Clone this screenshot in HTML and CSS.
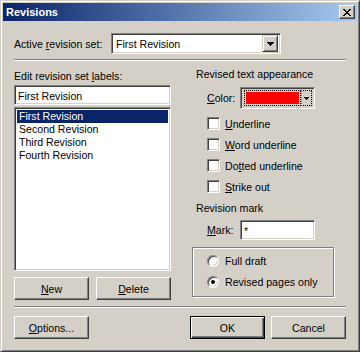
FILE: index.html
```html
<!DOCTYPE html>
<html lang="en">

<head>
     <meta charset="UTF-8">
     <title>Revisions</title>
     <link rel="stylesheet" href="styles.css">
</head>

<body>
     <div class="window">
          <div class="titlebar">
               <span class="title">Revisions</span>
               <span class="close">
                    <svg width="8" height="7" viewBox="0 0 8 7" shape-rendering="crispEdges">
                         <path d="M0 0h2v1h-2zM6 0h2v1h-2zM1 1h2v1h-2zM5 1h2v1h-2zM2 2h4v1h-4zM3 3h2v1h-2zM2 4h4v1h-4zM1 5h2v1h-2zM5 5h2v1h-2zM0 6h2v1h-2zM6 6h2v1h-2z" fill="#000" />
                    </svg>
               </span>
          </div>

          <div class="content">
               <div class="active-row">
                    <span class="active-label">Active <u>r</u>evision set:</span>
                    <div class="combo">
                         <span class="combo-text">First Revision</span>
                         <span class="drop">
                              <svg width="7" height="4" viewBox="0 0 7 4" shape-rendering="crispEdges">
                                   <path d="M0 0h7v1h-7zM1 1h5v1h-5zM2 2h3v1h-3zM3 3h1v1h-1z" fill="#000" />
                              </svg>
                         </span>
                    </div>
               </div>

               <div class="sep"></div>

               <div class="columns">
                    <div class="left">
                         <div class="caption">Edit revision set <u>l</u>abels:</div>
                         <div class="textbox">First Revision</div>
                         <div class="listbox">
                              <div class="item selected">First Revision</div>
                              <div class="item">Second Revision</div>
                              <div class="item">Third Revision</div>
                              <div class="item">Fourth Revision</div>
                         </div>
                         <div class="btn-row">
                              <span class="btn"><u>N</u>ew</span>
                              <span class="btn"><u>D</u>elete</span>
                         </div>
                    </div>

                    <div class="right">
                         <div class="heading">Revised text appearance</div>
                         <div class="field-row color-row">
                              <span class="field-label"><u>C</u>olor:</span>
                              <div class="colorbox">
                                   <span class="swatch-wrap"><span class="swatch"></span></span>
                                   <span class="color-drop">
                                        <svg width="5" height="3" viewBox="0 0 5 3" shape-rendering="crispEdges">
                                             <path d="M0 0h5v1h-5zM1 1h3v1h-3zM2 2h1v1h-1z" fill="#000" />
                                        </svg>
                                   </span>
                              </div>
                         </div>

                         <div class="checks">
                              <div class="check"><span class="checkbox"></span><span><u>U</u>nderline</span></div>
                              <div class="check"><span class="checkbox"></span><span><u>W</u>ord underline</span></div>
                              <div class="check"><span class="checkbox"></span><span>Do<u>t</u>ted underline</span></div>
                              <div class="check"><span class="checkbox"></span><span><u>S</u>trike out</span></div>
                         </div>

                         <div class="heading heading-mark">Revision mark</div>
                         <div class="field-row mark-row">
                              <span class="field-label"><u>M</u>ark:</span>
                              <div class="markbox">*</div>
                         </div>

                         <div class="group">
                              <div class="radio-row"><span class="radio"></span><span>Full draft</span></div>
                              <div class="radio-row"><span class="radio on"></span><span>Revised pages only</span></div>
                         </div>
                    </div>
               </div>

               <div class="sep sep-bottom"></div>

               <div class="footer">
                    <span class="btn"><u>O</u>ptions...</span>
                    <div class="footer-right">
                         <span class="btn default">OK</span>
                         <span class="btn">Cancel</span>
                    </div>
               </div>
          </div>
     </div>
</body>

</html>
```

FILE: styles.css
```css
* {
     box-sizing: border-box;
}

body {
     margin: 0;
     background: #d4d0c8;
     font-family: "Liberation Sans", Arial, sans-serif;
     font-size: 10.6px;
     color: #000;
}

u {
     text-decoration: underline;
}

.window {
     width: 360px;
     height: 352px;
     background: #d4d0c8;
     border: 1px solid;
     border-color: #d4d0c8 #404040 #404040 #d4d0c8;
     box-shadow: inset 1px 1px #fff, inset -1px -1px #808080;
     padding: 2px;
}

/* title bar */
.titlebar {
     height: 18px;
     display: flex;
     align-items: center;
     padding: 0 2px 0 3px;
     background: linear-gradient(to right, #0a246a, #a6caf0);
}

.title {
     color: #fff;
     font-weight: bold;
     font-size: 11px;
}

.close {
     margin-left: auto;
     width: 16px;
     height: 14px;
     display: flex;
     align-items: center;
     justify-content: center;
     background: #d4d0c8;
     border: 1px solid;
     border-color: #fff #404040 #404040 #fff;
     box-shadow: inset -1px -1px #808080;
}

.content {
     padding: 0 11px;
}

/* sunken fields */
.combo,
.textbox,
.listbox,
.markbox,
.colorbox {
     background: #fff;
     border: 1px solid;
     border-color: #808080 #fff #fff #808080;
     box-shadow: inset 1px 1px #404040, inset -1px -1px #d4d0c8;
}

.active-row {
     display: flex;
     align-items: center;
     height: 21px;
     margin-top: 12px;
}

.active-label {
     width: 97px;
}

.combo {
     width: 170px;
     height: 21px;
     display: flex;
     align-items: center;
     padding: 2px 2px 2px 4px;
}

.combo-text {
     flex: 1;
}

.drop {
     width: 16px;
     height: 17px;
     display: flex;
     align-items: center;
     justify-content: center;
     background: #d4d0c8;
     border: 1px solid;
     border-color: #d4d0c8 #404040 #404040 #d4d0c8;
     box-shadow: inset 1px 1px #fff, inset -1px -1px #808080;
}

.sep {
     height: 2px;
     margin-top: 5px;
     border-top: 1px solid #808080;
     border-bottom: 1px solid #fff;
}

.columns {
     display: grid;
     grid-template-columns: 157px 154px;
     column-gap: 21px;
}

/* left column */
.caption {
     margin-top: 9px;
     line-height: 13px;
}

.textbox {
     margin-top: 2px;
     height: 20px;
     line-height: 16px;
     padding: 2px 3px;
}

.listbox {
     margin-top: 2px;
     height: 164px;
     padding: 2px;
}

.item {
     height: 13px;
     line-height: 13px;
     padding-left: 2px;
}

.item.selected {
     background: #0a246a;
     color: #fff;
}

.btn-row {
     display: flex;
     gap: 7px;
     margin-top: 6px;
}

.btn {
     width: 75px;
     height: 23px;
     display: flex;
     align-items: center;
     justify-content: center;
     background: #d4d0c8;
     border: 1px solid;
     border-color: #fff #404040 #404040 #fff;
     box-shadow: inset -1px -1px #808080;
}

.btn.default {
     border-color: #000;
     box-shadow: inset 1px 1px #fff, inset -1px -1px #404040, inset -2px -2px #808080;
}

/* right column */
.heading {
     margin-top: 7px;
     padding-left: 4px;
     line-height: 13px;
}

.field-row {
     display: flex;
     align-items: center;
     padding-left: 15px;
}

.field-label {
     width: 33px;
}

.color-row {
     margin-top: 6px;
     height: 22px;
}

.colorbox {
     width: 75px;
     height: 22px;
     display: flex;
     padding: 2px;
     background: #d4d0c8;
}

.swatch-wrap {
     width: 59px;
     padding: 1px;
     border: 1px dotted #000;
     margin-left: 1px;
}

.swatch {
     display: block;
     height: 100%;
     background: #f00;
}

.color-drop {
     width: 11px;
     display: flex;
     align-items: center;
     justify-content: center;
     border: 1px dotted #000;
     border-left-color: #808080;
}

.checks {
     margin-top: 8px;
     padding-left: 15px;
     display: flex;
     flex-direction: column;
     gap: 8px;
}

.check {
     display: flex;
     align-items: center;
     height: 13px;
}

.checkbox {
     width: 13px;
     height: 13px;
     margin-right: 5px;
     background: #fff;
     border: 1px solid;
     border-color: #808080 #fff #fff #808080;
     box-shadow: inset 1px 1px #404040, inset -1px -1px #d4d0c8;
}

.heading-mark {
     margin-top: 9px;
}

.mark-row {
     margin-top: 5px;
     height: 20px;
}

.markbox {
     width: 75px;
     height: 20px;
     padding: 2px 3px;
     line-height: 16px;
}

.group {
     margin-top: 7px;
     width: 142px;
     height: 50px;
     padding: 7px 0 0 14px;
     border: 1px solid #808080;
     box-shadow: inset 1px 1px #fff, 1px 1px #fff;
     display: flex;
     flex-direction: column;
     gap: 9px;
}

.radio-row {
     display: flex;
     align-items: center;
     height: 12px;
}

.radio {
     width: 12px;
     height: 12px;
     margin-right: 6px;
     border-radius: 50%;
     background: #fff;
     border: 1px solid;
     border-color: #808080 #fff #fff #808080;
     box-shadow: inset 1px 1px #404040, inset -1px -1px #d4d0c8;
     display: flex;
     align-items: center;
     justify-content: center;
}

.radio.on::after {
     content: "";
     width: 4px;
     height: 4px;
     border-radius: 50%;
     background: #000;
}

.sep-bottom {
     margin-top: 6px;
}

.footer {
     display: flex;
     justify-content: space-between;
     margin-top: 8px;
}

.footer-right {
     display: flex;
     gap: 6px;
}
```
